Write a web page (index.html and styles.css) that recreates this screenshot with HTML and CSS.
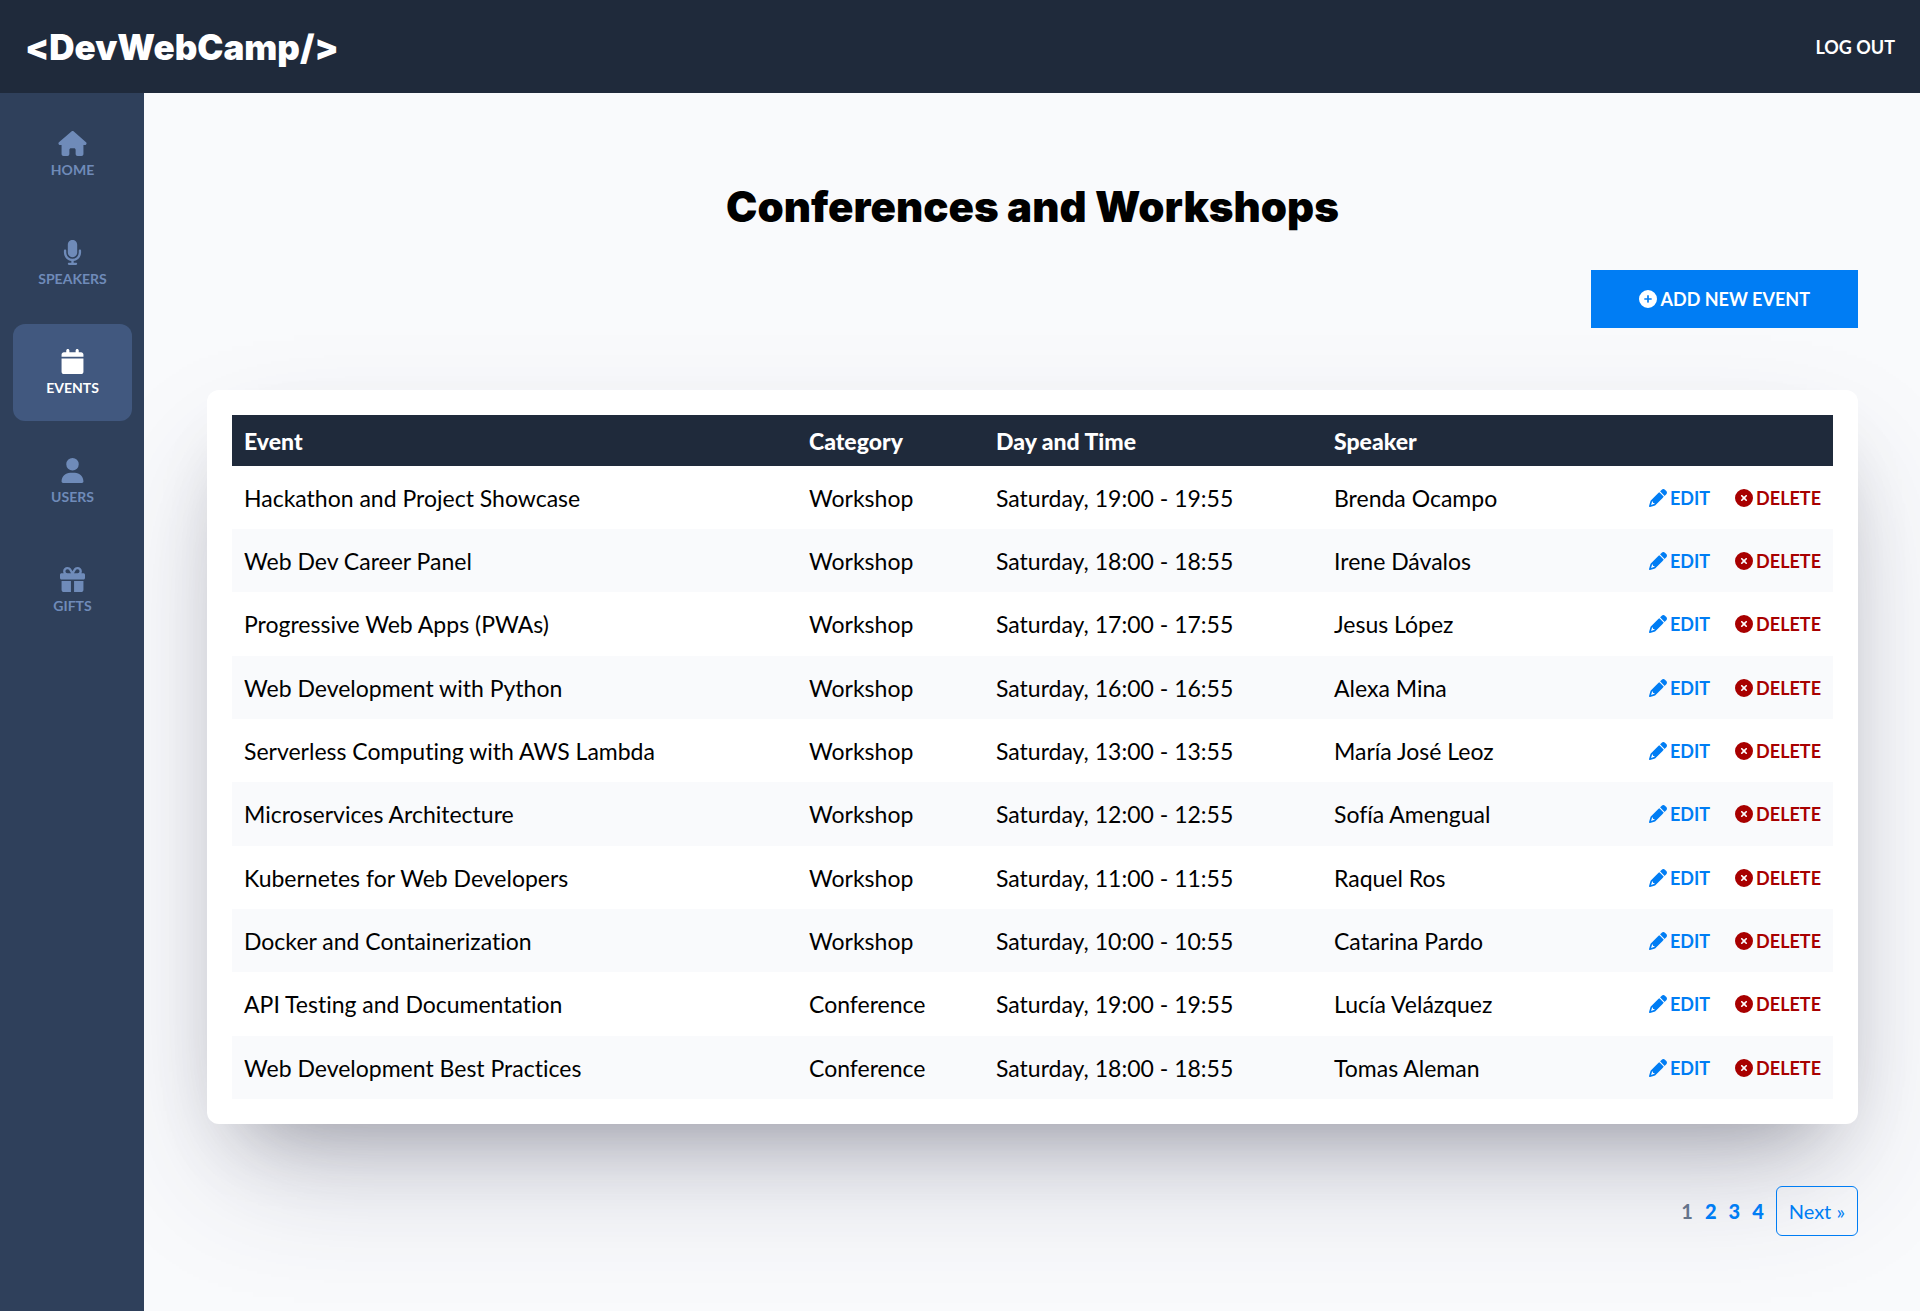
FILE: index.html
```html
<!DOCTYPE html>
<html lang="en">
<head>
<meta charset="utf-8">
<meta name="viewport" content="width=device-width, initial-scale=1">
<title>DevWebCamp - Conferences and Workshops</title>
<link rel="stylesheet" href="styles.css">
</head>
<body>
<svg class="sprite" aria-hidden="true">
  <symbol id="house" viewBox="0 0 576 512"><path d="M575.8 255.5c0 18-15 32.1-32 32.1h-32l.7 160.2c0 2.7-.2 5.4-.5 8.1V472c0 22.1-17.9 40-40 40H456c-1.1 0-2.2 0-3.3-.1c-1.4 .1-2.8 .1-4.2 .1H416 392c-22.1 0-40-17.9-40-40V448 384c0-17.7-14.3-32-32-32H256c-17.7 0-32 14.3-32 32v64 24c0 22.1-17.9 40-40 40H160 128.1c-1.5 0-3-.1-4.5-.2c-1.2 .1-2.4 .2-3.6 .2H104c-22.1 0-40-17.9-40-40V360c0-.9 0-1.9 .1-2.8V287.6H32c-18 0-32-14-32-32.1c0-9 3-17 10-24L266.4 8c7-7 15-8 22-8s15 2 21 7L564.8 231.5c8 7 12 15 11 24z"/></symbol>
  <symbol id="microphone" viewBox="0 0 384 512"><path d="M192 0C139 0 96 43 96 96V256c0 53 43 96 96 96s96-43 96-96V96c0-53-43-96-96-96zM64 216c0-13.3-10.7-24-24-24s-24 10.7-24 24v40c0 89.1 66.2 162.7 152 174.4V464H120c-13.3 0-24 10.7-24 24s10.7 24 24 24h72 72c13.3 0 24-10.7 24-24s-10.7-24-24-24H216V430.4c85.8-11.7 152-85.3 152-174.4V216c0-13.3-10.7-24-24-24s-24 10.7-24 24v40c0 70.7-57.3 128-128 128s-128-57.3-128-128V216z"/></symbol>
  <symbol id="calendar" viewBox="0 0 448 512"><path d="M96 32V64H48C21.5 64 0 85.5 0 112v48H448V112c0-26.5-21.5-48-48-48H352V32c0-17.7-14.3-32-32-32s-32 14.3-32 32V64H160V32c0-17.7-14.3-32-32-32S96 14.3 96 32zM448 192H0V464c0 26.5 21.5 48 48 48H400c26.5 0 48-21.5 48-48V192z"/></symbol>
  <symbol id="user" viewBox="0 0 448 512"><path d="M224 256A128 128 0 1 0 224 0a128 128 0 1 0 0 256zm-45.7 48C79.8 304 0 383.8 0 482.3C0 498.7 13.3 512 29.7 512H418.3c16.4 0 29.7-13.3 29.7-29.7C448 383.8 368.2 304 269.7 304H178.3z"/></symbol>
  <symbol id="gift" viewBox="0 0 512 512"><path d="M190.5 68.8L225.3 128H224 152c-22.1 0-40-17.9-40-40s17.9-40 40-40h2.2c14.9 0 28.8 7.9 36.3 20.8zM64 88c0 14.4 3.5 28 9.6 40H32c-17.7 0-32 14.3-32 32v64c0 17.7 14.3 32 32 32H480c17.7 0 32-14.3 32-32V160c0-17.7-14.3-32-32-32H438.4c6.1-12 9.6-25.6 9.6-40c0-48.6-39.4-88-88-88h-2.2c-31.9 0-61.5 16.9-77.7 44.4L256 85.5l-24.1-41C215.7 16.9 186.1 0 154.2 0H152C103.4 0 64 39.4 64 88zm336 0c0 22.1-17.9 40-40 40H288h-1.3l34.8-59.2C329.1 55.9 342.9 48 357.8 48H360c22.1 0 40 17.9 40 40zM32 288V464c0 26.5 21.5 48 48 48H224V288H32zM288 512H432c26.5 0 48-21.5 48-48V288H288V512z"/></symbol>
  <symbol id="plus" viewBox="0 0 512 512"><path d="M256 512A256 256 0 1 0 256 0a256 256 0 1 0 0 512zM232 344V280H168c-13.3 0-24-10.7-24-24s10.7-24 24-24h64V168c0-13.3 10.7-24 24-24s24 10.7 24 24v64h64c13.3 0 24 10.7 24 24s-10.7 24-24 24H280v64c0 13.3-10.7 24-24 24s-24-10.7-24-24z"/></symbol>
  <symbol id="xmark" viewBox="0 0 512 512"><path d="M256 512A256 256 0 1 0 256 0a256 256 0 1 0 0 512zM175 175c9.4-9.4 24.6-9.4 33.9 0l47 47 47-47c9.4-9.4 24.6-9.4 33.9 0s9.4 24.6 0 33.9l-47 47 47 47c9.4 9.4 9.4 24.6 0 33.9s-24.6 9.4-33.9 0l-47-47-47 47c-9.4 9.4-24.6 9.4-33.9 0s-9.4-24.6 0-33.9l47-47-47-47c-9.4-9.4-9.4-24.6 0-33.9z"/></symbol>
  <symbol id="pencil" viewBox="0 0 512 512"><path d="M410.3 231l11.3-11.3-33.9-33.9-62.1-62.1L291.7 89.8l-11.3 11.3-22.6 22.6L58.6 322.9c-10.4 10.4-18 23.3-22.2 37.4L1 480.7c-2.5 8.4-.2 17.5 6.1 23.7s15.3 8.5 23.7 6.1l120.3-35.4c14.1-4.2 27-11.8 37.4-22.2L387.7 253.7 410.3 231zM160 399.4l-9.1 22.7c-4 3.1-8.5 5.4-13.3 6.9L59.4 452l23-78.1c1.4-4.9 3.8-9.4 6.9-13.3l22.7-9.1v32c0 8.8 7.2 16 16 16h32zM362.7 18.7L348.3 33.2 325.7 55.8 314.3 67.1l33.9 33.9 62.1 62.1 33.9 33.9 11.3-11.3 22.6-22.6 14.5-14.5c25-25 25-65.5 0-90.5L453.3 18.7c-25-25-65.5-25-90.5 0z"/></symbol>
</svg>

<header class="header">
  <a class="header__logo" href="#">&lt;DevWebCamp/&gt;</a>
  <form class="header__form"><button class="header__logout" type="button">Log out</button></form>
</header>

<div class="dashboard">
  <aside class="sidebar">
    <nav class="menu">
      <a class="menu__link" href="#"><svg class="menu__icon"><use href="#house"/></svg><span>Home</span></a>
      <a class="menu__link" href="#"><svg class="menu__icon"><use href="#microphone"/></svg><span>Speakers</span></a>
      <a class="menu__link menu__link--current" href="#"><svg class="menu__icon"><use href="#calendar"/></svg><span>Events</span></a>
      <a class="menu__link" href="#"><svg class="menu__icon"><use href="#user"/></svg><span>Users</span></a>
      <a class="menu__link" href="#"><svg class="menu__icon"><use href="#gift"/></svg><span>Gifts</span></a>
    </nav>
  </aside>

  <main class="content">
    <h1 class="heading">Conferences and Workshops</h1>
    <div class="toolbar">
      <a class="add" href="#"><svg class="icon"><use href="#plus"/></svg>Add new event</a>
    </div>

    <div class="card">
      <table class="table">
        <colgroup><col><col class="col-category"><col class="col-day"><col class="col-speaker"><col class="col-actions"></colgroup>
        <thead>
          <tr><th scope="col">Event</th><th scope="col">Category</th><th scope="col">Day and Time</th><th scope="col">Speaker</th><th></th></tr>
        </thead>
        <tbody>
          <tr><td>Hackathon and Project Showcase</td><td>Workshop</td><td>Saturday, 19:00 - 19:55</td><td>Brenda Ocampo</td><td><div class="actions"><a class="action" href="#"><svg class="icon"><use href="#pencil"/></svg>Edit</a><button class="action action--delete" type="button"><svg class="icon"><use href="#xmark"/></svg>Delete</button></div></td></tr>
          <tr><td>Web Dev Career Panel</td><td>Workshop</td><td>Saturday, 18:00 - 18:55</td><td>Irene Dávalos</td><td><div class="actions"><a class="action" href="#"><svg class="icon"><use href="#pencil"/></svg>Edit</a><button class="action action--delete" type="button"><svg class="icon"><use href="#xmark"/></svg>Delete</button></div></td></tr>
          <tr><td>Progressive Web Apps (PWAs)</td><td>Workshop</td><td>Saturday, 17:00 - 17:55</td><td>Jesus López</td><td><div class="actions"><a class="action" href="#"><svg class="icon"><use href="#pencil"/></svg>Edit</a><button class="action action--delete" type="button"><svg class="icon"><use href="#xmark"/></svg>Delete</button></div></td></tr>
          <tr><td>Web Development with Python</td><td>Workshop</td><td>Saturday, 16:00 - 16:55</td><td>Alexa Mina</td><td><div class="actions"><a class="action" href="#"><svg class="icon"><use href="#pencil"/></svg>Edit</a><button class="action action--delete" type="button"><svg class="icon"><use href="#xmark"/></svg>Delete</button></div></td></tr>
          <tr><td>Serverless Computing with AWS Lambda</td><td>Workshop</td><td>Saturday, 13:00 - 13:55</td><td>María José Leoz</td><td><div class="actions"><a class="action" href="#"><svg class="icon"><use href="#pencil"/></svg>Edit</a><button class="action action--delete" type="button"><svg class="icon"><use href="#xmark"/></svg>Delete</button></div></td></tr>
          <tr><td>Microservices Architecture</td><td>Workshop</td><td>Saturday, 12:00 - 12:55</td><td>Sofía Amengual</td><td><div class="actions"><a class="action" href="#"><svg class="icon"><use href="#pencil"/></svg>Edit</a><button class="action action--delete" type="button"><svg class="icon"><use href="#xmark"/></svg>Delete</button></div></td></tr>
          <tr><td>Kubernetes for Web Developers</td><td>Workshop</td><td>Saturday, 11:00 - 11:55</td><td>Raquel Ros</td><td><div class="actions"><a class="action" href="#"><svg class="icon"><use href="#pencil"/></svg>Edit</a><button class="action action--delete" type="button"><svg class="icon"><use href="#xmark"/></svg>Delete</button></div></td></tr>
          <tr><td>Docker and Containerization</td><td>Workshop</td><td>Saturday, 10:00 - 10:55</td><td>Catarina Pardo</td><td><div class="actions"><a class="action" href="#"><svg class="icon"><use href="#pencil"/></svg>Edit</a><button class="action action--delete" type="button"><svg class="icon"><use href="#xmark"/></svg>Delete</button></div></td></tr>
          <tr><td>API Testing and Documentation</td><td>Conference</td><td>Saturday, 19:00 - 19:55</td><td>Lucía Velázquez</td><td><div class="actions"><a class="action" href="#"><svg class="icon"><use href="#pencil"/></svg>Edit</a><button class="action action--delete" type="button"><svg class="icon"><use href="#xmark"/></svg>Delete</button></div></td></tr>
          <tr><td>Web Development Best Practices</td><td>Conference</td><td>Saturday, 18:00 - 18:55</td><td>Tomas Aleman</td><td><div class="actions"><a class="action" href="#"><svg class="icon"><use href="#pencil"/></svg>Edit</a><button class="action action--delete" type="button"><svg class="icon"><use href="#xmark"/></svg>Delete</button></div></td></tr>
        </tbody>
      </table>
    </div>

    <nav class="pagination" aria-label="Pagination">
      <span class="pagination__current">1</span>
      <a class="pagination__number" href="#">2</a>
      <a class="pagination__number" href="#">3</a>
      <a class="pagination__number" href="#">4</a>
      <a class="pagination__next" href="#">Next »</a>
    </nav>
  </main>
</div>
</body>
</html>
```
FILE: styles.css
```css
* { box-sizing: border-box; }

body {
  margin: 0;
  background: #fff;
  color: #000;
  font-family: Lato, "Open Sans", sans-serif;
  font-size: 23px;
  font-variant-ligatures: none;
  line-height: 28px;
}

a { color: inherit; text-decoration: none; }

button {
  padding: 0;
  border: 0;
  background: none;
  font-family: inherit;
  cursor: pointer;
}

.sprite { display: none; }

.icon { width: 18px; height: 18px; fill: currentColor; }

/* Header */
.header {
  display: flex;
  align-items: center;
  justify-content: space-between;
  height: 93px;
  padding: 0 25px;
  background: #1f2a3b;
  color: #fff;
}

.header__logo {
  font-family: Inter, Lato, sans-serif;
  font-size: 35px;
  font-weight: 900;
  line-height: 48px;
}

.header__form { padding-bottom: 4px; }

.header__logout {
  color: #fff;
  font-size: 18px;
  font-weight: 700;
  line-height: 24px;
  text-transform: uppercase;
}

.dashboard { display: grid; grid-template-columns: 144px minmax(0, 1fr); }

/* Sidebar */
.sidebar { padding: 13px 12px 13px 13px; background: #2f405b; }

.menu { display: flex; flex-direction: column; gap: 12px; }

.menu__link {
  display: flex;
  flex-direction: column;
  align-items: center;
  gap: 3px;
  padding: 25px 0 22px;
  border-radius: 12px;
  color: #6f8bb9;
  font-size: 14px;
  font-weight: 700;
  line-height: 22px;
  text-transform: uppercase;
}

.menu__link--current { background: #41587f; color: #fff; }

.menu__icon { width: 29px; height: 25px; fill: currentColor; }

/* Content */
.content {
  overflow: hidden;
  padding: 84px 62px 75px 63px;
  background: #f9fafc;
}

.heading {
  margin: 0 0 33px;
  font-family: Inter, Lato, sans-serif;
  font-size: 42px;
  font-weight: 900;
  line-height: 60px;
  text-align: center;
}

.toolbar { display: flex; justify-content: flex-end; margin-bottom: 62px; }

.add {
  display: flex;
  align-items: center;
  gap: 3px;
  padding: 17px 48px;
  background: #007df4;
  color: #fff;
  font-size: 18px;
  font-weight: 700;
  line-height: 24px;
  text-transform: uppercase;
}

.card {
  padding: 25px;
  border-radius: 12px;
  background: #fff;
  box-shadow: 0 62px 125px -25px rgb(50 50 93 / 25%), 0 38px 75px -38px rgb(0 0 0 / 30%);
}

.table { width: 100%; border-collapse: collapse; table-layout: fixed; }

.col-category { width: 187px; }
.col-day { width: 338px; }
.col-speaker { width: 250px; }
.col-actions { width: 261px; }

.table th {
  height: 51px;
  padding: 0 12px;
  background: #1f2a3b;
  color: #fff;
  font-weight: 900;
  text-align: left;
}

.table td { height: 63px; padding: 0 12px; }
.table tr:nth-child(3n) td { height: 64px; }
.table tbody tr:nth-child(even) { background: #f9fafc; }

.actions { display: flex; align-items: center; justify-content: flex-end; gap: 25px; }

.action {
  display: flex;
  align-items: center;
  gap: 3px;
  color: #007df4;
  font-size: 18px;
  font-weight: 700;
  line-height: 24px;
  text-transform: uppercase;
}

.action--delete { color: #a80000; }

/* Pagination */
.pagination {
  display: flex;
  align-items: center;
  justify-content: flex-end;
  gap: 12px;
  margin-top: 62px;
  color: #007df4;
  font-size: 20px;
}

.pagination__current { color: #64748b; font-weight: 700; }
.pagination__number { font-weight: 900; }

.pagination__next {
  padding: 10px 12px;
  border: 1px solid #007df4;
  border-radius: 6px;
}
```
